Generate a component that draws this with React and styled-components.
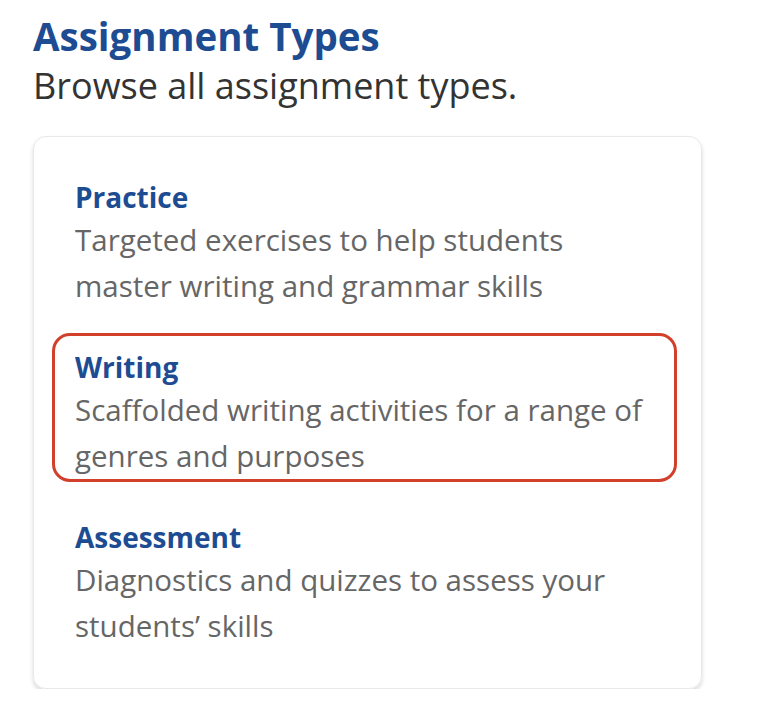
import React from "react";
import styled, { createGlobalStyle } from "styled-components";

const types = [
  {
    name: "Practice",
    lines: ["Targeted exercises to help students", "master writing and grammar skills"],
  },
  {
    name: "Writing",
    lines: ["Scaffolded writing activities for a range of", "genres and purposes"],
    highlighted: true,
  },
  {
    name: "Assessment",
    lines: ["Diagnostics and quizzes to assess your", "students\u2019 skills"],
  },
];

const App = () => {
  return (
    <>
      <GlobalStyle />
      <Page>
        <Heading>Assignment Types</Heading>
        <Subtitle>Browse all assignment types.</Subtitle>
        <Card>
          {types.map((t) => (
            <Item key={t.name} $highlighted={t.highlighted}>
              <ItemTitle>{t.name}</ItemTitle>
              <ItemText>
                {t.lines.map((l, i) => (
                  <Line key={i}>{l}</Line>
                ))}
              </ItemText>
            </Item>
          ))}
        </Card>
      </Page>
    </>
  );
};

const GlobalStyle = createGlobalStyle`
  body {
    margin: 0;
    background: #fff;
    font-family: "Open Sans", Lato, sans-serif;
  }
`;

const Page = styled.div`
  padding: 13px 0 0 33px;
`;

const Heading = styled.h1`
  margin: 0;
  font-size: 38.5px;
  line-height: 46px;
  font-weight: 700;
  color: #1e4c92;
`;

const Subtitle = styled.p`
  margin: 6px 0 0;
  font-size: 36px;
  line-height: 42px;
  color: #333;
`;

const Card = styled.div`
  margin-top: 29px;
  width: 669px;
  box-sizing: border-box;
  padding: 26px 24px 36px 18px;
  border: 1px solid #e8e8e8;
  border-radius: 13px;
  box-shadow: 0 3px 4px rgba(0, 0, 0, 0.15);
  display: flex;
  flex-direction: column;
  gap: 21px;
`;

const Item = styled.div`
  padding: 14px 20px 0;
  border: 3px solid ${(p) => (p.$highlighted ? "#d2402b" : "transparent")};
  border-radius: 18px;
`;

const ItemTitle = styled.div`
  font-size: 28px;
  line-height: 34px;
  font-weight: 700;
  color: #1e4c92;
`;

const ItemText = styled.div`
  margin-top: 3px;
  font-size: 29.5px;
  line-height: 46px;
  color: #666;
`;

const Line = styled.span`
  display: block;
  white-space: nowrap;
`;

export default App;
